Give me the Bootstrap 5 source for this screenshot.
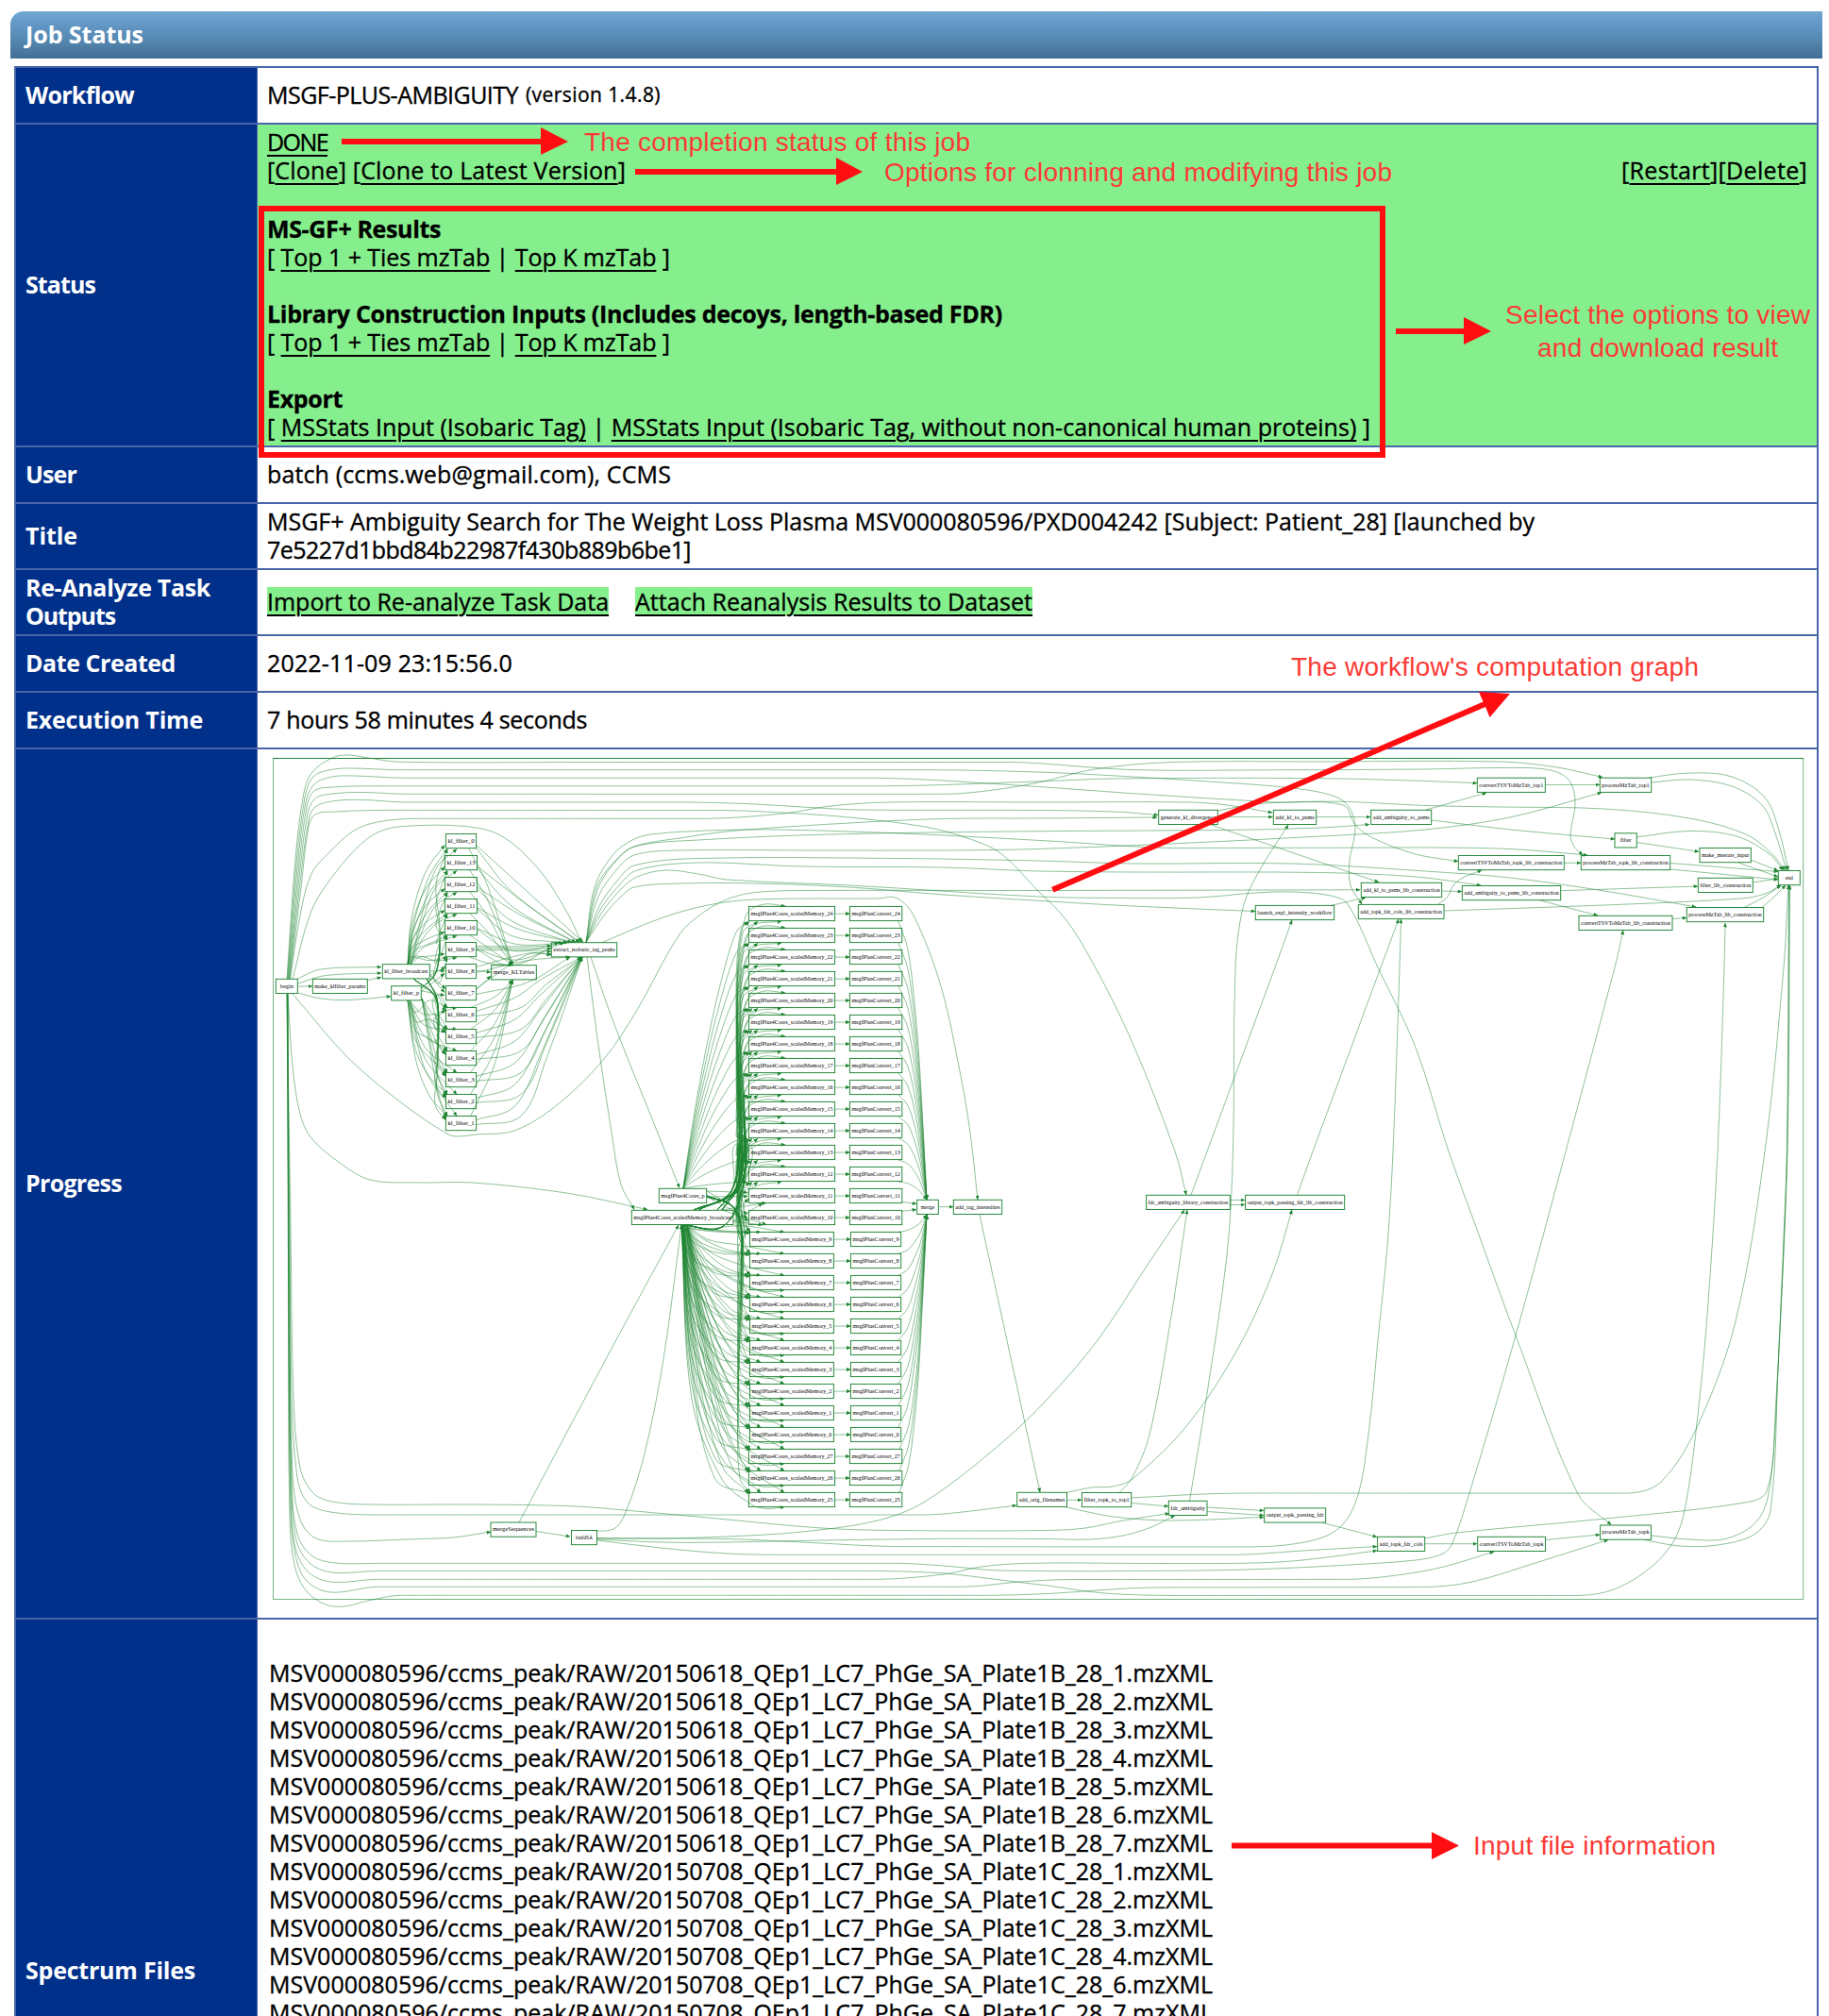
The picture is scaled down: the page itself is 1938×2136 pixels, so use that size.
<!DOCTYPE html>
<html lang="en">
<head>
<meta charset="utf-8">
<title>Job Status</title>
<meta name="viewport" content="width=device-width, initial-scale=1">
<link href="https://cdn.jsdelivr.net/npm/bootstrap@5.3.0/dist/css/bootstrap.min.css" rel="stylesheet">
<style>
body{background:#fff;color:#000;font-family:"Open Sans","Noto Sans",sans-serif;font-size:25px;line-height:30px}
.page{height:2136px;padding:12px 7px 0 11px}
.titlebar{height:50px;padding:0 0 2px 16px;color:#fff;font-weight:700;border-top-left-radius:14px;background:linear-gradient(#70a8d4 0%,#6093c1 35%,#5689b1 60%,#416e96 100%)}
.job{margin:8px 4px 0 4px;border:2px solid #4966a8;border-bottom:0}
.job-row{min-height:60px;border-bottom:2px solid #4966a8}
.job-key{width:256px;flex:none;padding:3px 10px 5px;background:#00308a;color:#fff;font-weight:700;border-right:1px solid #4966a8}
.job-val{padding:3px 10px 5px}
.job-val .fit{-webkit-text-stroke:.35px #000}
.files .fit{-webkit-text-stroke:.35px #000}
.done-bg{background:#86ef8d}
.page a{color:#000;text-decoration:underline;text-decoration-thickness:2px;text-underline-offset:4px;text-decoration-skip-ink:auto}
.fit{white-space:pre;display:inline-block}
.ver{font-size:21px;-webkit-text-stroke:.2px #000}
.clones{margin-bottom:2px}
.status-row{height:342px}.graph-row{height:922px}.files-row{height:745px}
.files{padding:41px 0 0 12px}
.notes{z-index:5;font-family:"Liberation Sans",Arial,sans-serif;font-size:28px}
.graph{display:block}
.graph path{fill:none;stroke:#1f8533;stroke-width:.5}
.graph rect{fill:#fff;stroke:#1f8533;stroke-width:.95}
.graph .frame{fill:none;stroke-width:.6}
.graph text{font-family:"Liberation Serif","Times New Roman",serif;font-size:6.5px;fill:#000}
</style>
<script src="https://cdn.jsdelivr.net/npm/bootstrap@5.3.0/dist/js/bootstrap.bundle.min.js"></script>
</head>
<body>
<div class="page position-relative overflow-hidden">
  <header class="titlebar d-flex align-items-center"><span class="fit" data-w="125">Job Status</span></header>
  <main class="job">
    <div class="job-row d-flex"><div class="job-key d-flex align-items-center"><span class="fit" data-w="115">Workflow</span></div>
      <div class="job-val flex-grow-1 d-flex align-items-center gap-2"><span class="fit" data-w="266">MSGF-PLUS-AMBIGUITY</span><span class="fit ver" data-w="143">(version 1.4.8)</span></div></div>
    <div class="job-row status-row d-flex"><div class="job-key d-flex align-items-center"><span class="fit" data-w="74">Status</span></div>
      <div class="job-val done-bg flex-grow-1">
        <div><a href="#" class="fit" data-w="64">DONE</a></div>
        <div class="clones d-flex justify-content-between"><span class="fit" data-w="380">[<a href="#">Clone</a>] [<a href="#">Clone to Latest Version</a>]</span><span class="fit" data-w="197">[<a href="#">Restart</a>][<a href="#">Delete</a>]</span></div>
        <br>
        <div><b class="fit" data-w="184">MS-GF+ Results</b></div>
        <div><span class="fit" data-w="427">[ <a href="#">Top 1 + Ties mzTab</a> | <a href="#">Top K mzTab</a> ]</span></div>
        <br>
        <div><b class="fit" data-w="779">Library Construction Inputs (Includes decoys, length-based FDR)</b></div>
        <div><span class="fit" data-w="427">[ <a href="#">Top 1 + Ties mzTab</a> | <a href="#">Top K mzTab</a> ]</span></div>
        <br>
        <div><b class="fit" data-w="80">Export</b></div>
        <div><span class="fit" data-w="1169">[ <a href="#">MSStats Input (Isobaric Tag)</a> | <a href="#">MSStats Input (Isobaric Tag, without non-canonical human proteins)</a> ]</span></div>
      </div></div>
    <div class="job-row d-flex"><div class="job-key d-flex align-items-center"><span class="fit" data-w="54">User</span></div>
      <div class="job-val d-flex align-items-center"><span class="fit" data-w="428">batch (ccms.web@gmail.com), CCMS</span></div></div>
    <div class="job-row d-flex"><div class="job-key d-flex align-items-center"><span class="fit" data-w="55">Title</span></div>
      <div class="job-val"><div><span class="fit" data-w="1343">MSGF+ Ambiguity Search for The Weight Loss Plasma MSV000080596/PXD004242 [Subject: Patient_28] [launched by</span></div><div><span class="fit" data-w="449">7e5227d1bbd84b22987f430b889b6be1]</span></div></div></div>
    <div class="job-row d-flex"><div class="job-key"><div><span class="fit" data-w="196">Re-Analyze Task</span></div><div><span class="fit" data-w="95">Outputs</span></div></div>
      <div class="job-val d-flex align-items-center"><a href="#" class="fit done-bg me-4" data-w="362">Import to Re-analyze Task Data</a><a href="#" class="fit done-bg ms-1" data-w="421">Attach Reanalysis Results to Dataset</a></div></div>
    <div class="job-row d-flex"><div class="job-key d-flex align-items-center"><span class="fit" data-w="159">Date Created</span></div>
      <div class="job-val d-flex align-items-center"><span class="fit" data-w="260">2022-11-09 23:15:56.0</span></div></div>
    <div class="job-row d-flex"><div class="job-key d-flex align-items-center"><span class="fit" data-w="188">Execution Time</span></div>
      <div class="job-val d-flex align-items-center"><span class="fit" data-w="339">7 hours 58 minutes 4 seconds</span></div></div>
    <div class="job-row graph-row d-flex"><div class="job-key d-flex align-items-center"><span class="fit" data-w="102">Progress</span></div>
      <svg class="graph" id="graph" width="1651" height="920" viewBox="273 794 1651 920"><defs><marker id="tip" viewBox="0 0 6 5" refX="5.5" refY="2.5" markerWidth="5" markerHeight="4" markerUnits="userSpaceOnUse" orient="auto"><polygon points="0,0 6,2.5 0,5" fill="#1f8533"/></marker></defs></svg></div>
    <div class="job-row files-row d-flex"><div class="job-key d-flex align-items-center"><span class="fit" data-w="180">Spectrum Files</span></div>
      <div class="files" id="files"></div></div>
  </main>

  <svg class="notes position-absolute top-0 start-0" width="1938" height="2136" viewBox="0 0 1938 2136">
    <rect x="277" y="221" width="1188" height="261" fill="none" stroke="#ff0d10" stroke-width="6"/>
    <g fill="#ff0d10">
      <path d="M362 147H573V135L602 150L573 164V153H362Z"/>
      <path d="M673 179H886V167L914 182L886 196V185H673Z"/>
      <path d="M1479 348H1551V336L1580 351L1551 365V354H1479Z"/>
      <path d="M1305 1952.500H1517V1941L1546 1955.500L1517 1970V1958.500H1305Z"/>
      <path d="M1114 940L1571.500 743.500L1567 733L1600 735L1578.500 760L1574 749L1116.500 945.500Z"/>
    </g>
    <g fill="#fc3a36">
      <text x="619" y="160" textLength="409">The completion status of this job</text>
      <text x="937" y="191.500" textLength="538">Options for clonning and modifying this job</text>
      <text x="1595" y="343" textLength="323">Select the options to view</text>
      <text x="1629" y="378" textLength="255">and download result</text>
      <text x="1368" y="716" textLength="432">The workflow's computation graph</text>
      <text x="1561" y="1965" textLength="257">Input file information</text>
    </g>
  </svg>
</div>

<script>
// Input files
const names = [];
[1,2,3,4,5,6,7].forEach(n => names.push('20150618_QEp1_LC7_PhGe_SA_Plate1B_28_' + n));
[1,2,3,4,6,7].forEach(n => names.push('20150708_QEp1_LC7_PhGe_SA_Plate1C_28_' + n));
document.getElementById('files').innerHTML = names.map(n => `<div><span class="fit" data-w="1000">MSV000080596/ccms_peak/RAW/${n}.mzXML</span></div>`).join('');

document.querySelectorAll('.fit').forEach(e => {
  const w = e.getBoundingClientRect().width, n = e.textContent.length;
  e.style.letterSpacing = ((+e.dataset.w - w) / n).toFixed(3) + 'px';
});

// Workflow graph
const nodes = [], edges = [];
const node = (x1, x2, y, t) => nodes.push([x1, x2, y, t]);
const edge = (...p) => edges.push(p);

node(292.3,315.3,1037.3,'begin'); node(331.3,389.3,1037.3,'make_klfilter_params');
node(405.3,455.3,1021.7,'kl_filter_broadcast'); node(414.7,446.3,1044.7,'kl_filter_p');
node(520.7,568.3,1022.7,'merge_KLTables'); node(584.3,653.7,998.7,'extract_isobaric_tag_peaks');
node(698.3,748.7,1259.3,'msgfPlus4Cores_p'); node(669.3,777,1282.3,'msgfPlus4Cores_scaledMemory_broadcast');
node(971.7,994.3,1271.3,'merge'); node(1010.3,1061.7,1271.3,'add_tag_intensities');
node(520,568,1613,'mergeSequences'); node(605.5,632.5,1621.5,'buildSA');
node(1077.7,1130.5,1581.3,'add_orig_filenames'); node(1146.4,1198.7,1581.5,'filter_topk_to_top1');
node(1238.3,1279,1590.3,'fdr_ambiguity'); node(1339.7,1404.7,1597.9,'output_topk_passing_fdr');
node(1459.6,1509.7,1628.3,'add_topk_fdr_cols'); node(1565.7,1637.5,1628.3,'convertTSVToMzTab_topk');
node(1695.6,1749.5,1616,'processMzTab_topk');
node(1214.6,1303.3,1266.3,'fdr_ambiguity_library_construction'); node(1319.6,1424.7,1266.3,'output_topk_passing_fdr_lib_construction');
node(1227.7,1290.3,858.3,'generate_kl_divergence'); node(1349.3,1394.7,858.3,'add_kl_to_psms'); node(1452.7,1516.7,858.3,'add_ambiguity_to_psms');
node(1565.3,1637.3,824.2,'convertTSVToMzTab_top1'); node(1695.3,1749.7,824.2,'processMzTab_top1');
node(1711,1734.3,882.8,'filter'); node(1801,1855.3,898.5,'make_msstats_input');
node(1545.3,1657.3,906.5,'convertTSVToMzTab_topk_lib_construction'); node(1675.3,1769.7,906.5,'processMzTab_topk_lib_construction');
node(1884.3,1907.3,922.5,'end'); node(1442.3,1527.7,935.3,'add_kl_to_psms_lib_construction');
node(1549.3,1653.7,938.5,'add_ambiguity_to_psms_lib_construction'); node(1799.3,1857.3,930.3,'filter_lib_construction');
node(1439.3,1530,958.4,'add_topk_fdr_cols_lib_construction'); node(1330.3,1413.7,959.4,'launch_expl_intensity_workflow');
node(1673,1772,970.3,'convertTSVToMzTab_lib_construction'); node(1787.3,1868.7,961.5,'processMzTab_lib_construction');

// begin, upper lanes
edge(304,1037,313,910,322,840,331,818,352,803,368,800,390,803,424,807.3,620,807.5,1070,807.5,1100,808.7,1200,815.6,1350,815.8,1510,815,1590,813.5,1640,815.5,1662,826,1669,850,1664,885,1668,897,1677,906);
edge(304.5,1037,314,915,323,845,332,823,350,815.7,372,814,425,815.7,980,815.7,1100,818,1200,823,1280,828,1370,835,1415,844,1430,856,1436,878,1430,912,1431,938,1443,958);
edge(305,1037,315,920,324,850,333,831,352,823,375,822,430,824.3,930,824.3,1100,833.5,1190,840,1350,850,1423,853,1436,874,1455,888,1500,905,1545,912.7);
edge(305.5,1037,316,925,325,855,333,838,352,834,400,832.8,940,832.8,1100,828,1180,825,1400,824.7,1510,827.5,1565,829.7);
edge(306,1037,317,930,326,862,334,846,352,841,385,839.5,430,841.3,1003,841.3,1060,836,1105,828,1160,815,1240,807.6,1400,807,1590,807,1650,813,1698,823.5);
edge(306.5,1037,318,935,327,869,334,855,355,848.5,385,847.5,430,850,730,850,790,851.5,850,855,910,858,1100,858.5,1180,860,1227,863.5);
edge(307,1037,319,940,327,876,334,863,355,860,410,858.4,760,858.5,830,861,900,866,980,876,1025,888,1060,904,1100,944,1130,975,1160,1024,1200,1105,1245,1220,1257,1266);
edge(307.5,1037,318,970,330,926,350,902,375,880,400,871,440,867.3,750,867.3,830,862,880,854,940,850,1100,850,1260,850,1300,853,1348,861);
edge(310,1037,330,965,355,925,385,892,405,880,430,875.3,490,875.3,530,885,570,920,600,965,616,998);
edge(315,1037,340,1027,404,1024.5); edge(316,1042,345,1033.5,404,1031); edge(316,1045,331,1045); edge(389,1038.5,404,1035.5);
edge(316,1052,340,1058,370,1059.5,414,1055.7);
edge(310,1053,370,1122,430,1172,475,1202,485,1204,505,1202,545,1198,590,1171,640,1122,675,1070,720,990,745,967,770,953,800,945.5,860,943.5,1100,943.5,1441,942.8);
edge(305,1053,310,1130,318,1180,330,1206,360,1232,392,1250,440,1253,500,1253,600,1264,686,1281.5);
// begin, lower lanes
edge(304,1053,308,1300,311,1480,318,1555,332,1582,352,1591,390,1594,500,1594,600,1595.5,650,1599,750,1608,870,1619,950,1621.5,1110,1621.5,1150,1619,1190,1611,1239,1603.5);
edge(304,1053,307,1300,309,1480,315,1565,326,1592,350,1602,400,1605,980,1605,1020,1602,1077,1595);
edge(304,1053,307,1400,310,1560,318,1610,335,1630,370,1633,430,1631,480,1629,520,1623);
edge(304.5,1053,307,1400,309,1570,315,1625,330,1648,355,1656,400,1656.3,950,1656.3,1000,1659,1060,1664,1270,1664,1350,1662,1430,1658,1500,1653,1527,1647,1538,1637,1557,1582,1606,1415,1659,1220,1711,1025,1720,986);
edge(304.5,1053,306,1400,309,1580,314,1632,328,1656,352,1666,400,1664.5,930,1664.5,1000,1667,1060,1674,1110,1680,1170,1688,1250,1690.5,1670,1690.5,1710,1684,1750,1660,1775,1630,1787,1590,1800,1490,1810,1380,1820,1220,1827,1025,1828,978);
edge(305,1053,306,1400,308,1590,313,1640,326,1665,350,1676,400,1673.3,930,1673.3,1000,1668,1040,1660,1090,1656.3,1230,1656.5,1330,1656,1380,1653,1459,1643);
edge(305,1053,306,1400,308,1600,313,1648,325,1675,350,1687,400,1681.3,1020,1681.3,1080,1676,1135,1673.5,1430,1673.3,1480,1669,1530,1660,1583,1644);
edge(305,1053,305.5,1400,307,1610,312,1658,324,1685,345,1700,365,1702,390,1696,425,1690.3,1050,1690.3,1110,1688.5,1220,1682,1510,1681.5,1560,1676,1630,1655,1704,1631.5);
edge(568,1622.5,604,1628); edge(550,1613,650,1425,719,1298);
edge(622,1621.5,650,1620,663,1602,683,1540,703,1440,722,1298);
edge(633,1629.5,700,1630,770,1628,850,1623,930,1611,980,1591,1060,1530,1110,1482,1163,1420,1216,1340,1255,1282);
edge(633,1630,770,1630.5,850,1634,950,1638.6,1300,1639,1370,1636,1415,1622,1437,1590,1450,1520,1460,1420,1470,1320,1476,1220,1483,1025,1484.5,974);
edge(633,1631,700,1634,770,1634,870,1632,1000,1630.3,1110,1630.5,1155,1631,1190,1627,1220,1618,1245,1605.5);
edge(633,1632,700,1640,770,1646,830,1647.3,1310,1647.3,1380,1643,1459,1638.5);
// extract_isobaric_tag_peaks fan
[[630,940,650,905,670,890,690,884,750,880,820,879,900,881,1000,885,1120,891.5,1240,898.5,1510,898,1600,899.5,1682,906],
 [632,940,652,912,672,897,720,888,780,880,900,872,1000,867.5,1100,867,1226,866],
 [633,943,652,913,672,897,740,890,880,884,1100,880.7,1300,879.5,1400,877,1451,873.5],
 [634,950,653,922,672,906,720,901,860,901,1000,901,1100,899.5,1240,894,1400,886,1510,879,1600,866,1697,839.7],
 [635,960,655,932,672,917,740,909.5,950,909.5,1100,912,1200,915,1370,915,1510,923,1600,930,1700,944,1797,961],
 [636,964,656,938,675,922,740,914,850,918,1000,919,1100,923,1200,924,1400,924.5,1500,929,1569,938],
 [637,968,658,942,675,929,705,922,740,926,770,932,900,938,1100,950,1190,951.5,1270,951,1330,946,1370,945,1410,949,1428,958,1460,1025,1500,1110,1535,1220,1564,1300,1606,1415,1672,1583,1707,1615.5],
 [640,970,658,950,672,940,720,936,800,936,900,940,1000,948,1120,955.5,1200,960,1330,965.5]].forEach(a => edge(621,998.5,...a));
edge(638,998.5,700,973,750,959,800,953,930,952,950,951.5,968,970,997,1045,1018,1140,1028,1200,1036,1271);
edge(622,1014,633,1100,648,1200,658,1255,672,1281.5); edge(626,1014,650,1083,690,1183,720,1258.5);
// right-hand side
edge(1290,865.6,1348.5,865.6); edge(1290,859,1330,852,1380,849.5,1430,849.5,1510,853.5,1590,855,1700,857,1790,867,1850,884,1878,905,1891,922);
edge(1282,873.5,1461,934.7); edge(1395,865.6,1452,865.6); edge(1511,858,1575,840); edge(1517,869,1600,879,1711,889);
edge(1637,831.5,1695,831.5);
edge(1747,824,1790,819,1835,823,1870,845,1885,880,1895,922); edge(1750,829,1790,826,1835,833,1867,853,1880,880,1893,922);
edge(1734,892.5,1800,902.3); edge(1734,887,1790,880.5,1840,886,1875,905,1889,922);
edge(1855,911,1884,922.5); edge(1842,914,1884,929); edge(1657,914.3,1675,914.3);
edge(1770,914.5,1884,923.5); edge(1770,921,1884,932); edge(1857,935,1884,931);
edge(1528,944,1549,944.6); edge(1654,943.7,1799,939); edge(1632,954,1693,970); edge(1772,973.5,1787,972.5);
edge(1848,961.5,1870,950,1887,938); edge(1867,961.5,1880,950,1892,938);
edge(1530,965,1700,959,1845,952,1870,947,1887,938);
edge(1524,958,1534,950,1540,938,1550,930,1570,922); edge(1410,959.5,1447,951);
edge(1260.5,1590,1278,1483,1300,1330,1306.5,1220,1309,1025,1317,962,1333,925,1365,874);
edge(1262,1266,1279,1220,1351,1025,1369,975); edge(1374.5,1266,1391,1220,1463,1025,1482,974);
edge(1303.5,1271.5,1319,1271.5); edge(1303.5,1276.5,1319,1276.5);
edge(1130,1581.5,1157,1576,1179,1575,1200,1567,1258,1510,1311,1430,1348,1350,1369,1282);
edge(1186,1581.5,1200,1565,1218,1520,1239,1407,1258,1282);
edge(1199,1592.5,1238,1596); edge(1199,1587,1290,1582.5,1400,1582,1725,1582,1760,1570,1799,1510,1839,1400,1870,1220,1890,1025,1895,938);
edge(1130.5,1589.3,1146,1589.3); edge(1130,1597,1180,1607,1240,1611,1339,1607.5);
edge(1279,1597,1339,1600.5); edge(1279,1601.5,1339,1605.5); edge(1402,1613.5,1459,1628.5);
edge(1510,1635.7,1565,1635.7); edge(1637.5,1631.5,1695,1626);
edge(1510,1630,1543,1624,1691,1610,1849,1592,1872,1580,1881,1500,1891,1287,1893.5,1220,1895.5,938);
edge(1750,1627,1790,1631,1830,1630,1863,1610,1876,1570,1884,1450,1893.5,1220,1896,938);
edge(1742,1631.5,1780,1638,1820,1637,1860,1625,1876,1600,1884,1450,1894,1220,1896.5,938);
edge(994.5,1278.7,1010,1278.7); edge(1038,1287,1102,1581);

// kl_filter column
[0,13,12,11,10,9,8,7,6,5,4,3,2,1].forEach((k, i) => {
  const y = 883.5 + 23 * i, wide = k > 9, l = wide ? 471.4 : 472.4, r = wide ? 505.5 : 504.6;
  node(l, r, y, 'kl_filter_' + k);
  if (i < 6) {
    const d = 1022 - y;
    edge(432,1022,436,1022-d*.35,451,y+10+d*.22,471,y+12);
    edge(433,1022,438,1022-d*.3,455,y+14+d*.22,474,y+16);
    edge(435,1022,446,1022-d*.35,462,y+16+d*.15,484,y+16);
    edge(447,1047,462,1030,466,1010-d*.2,462,y+40+d*.1,474,y+16);
    edge(r-8,y+15,(r+530)/2,y+15+d*.3,543,1022.5);
    edge(r,y+12-i,(r+590)/2,y+12+d*.28,598+(5-i)*4,998.5);
    edge(r,y+15-i*1.5,(r+580)/2,y+17+d*.32,592+(5-i)*4.5,998.5);
  } else if (i < 8) {
    edge(456,1029+(i-6)*5,471,y+7); edge(456,1033,472,y+3); edge(447,1050,471,y+10);
    edge(r,y+7-(i-6)*3,520,1030+(i-6)*4);
    edge(r,y+3,560,1010+i-6,584,1006+i*.8); edge(r,y+9,560,y-4,604,1014);
  } else {
    const d = y - 1038;
    edge(432,1060,440,1060+d*.42,455,y-4-d*.12,474,y);
    edge(434,1060,450,1060+d*.5,484,y);
    edge(447,1058,462,1058+d*.62,472,y+3);
    edge(452,1037,463,1058,464,1060+d*.5,463,y-10-d*.1,474,y);
    edge(438,1037,462,1058,463,1065+d*.5,461,y-12,472,y+4);
    edge(r-6,y,525,y-d*.4,543,1038.5);
    edge(r,y+4,545,y-10,572,y-20-d*.3,616,1014);
    edge(r,y+9,552,y,578,y-15-d*.3,617,1014);
  }
  if (i === 5) for (let q = 0; q < 3; q++) edge(r,y+4+q*2,560,1003+q*2,584,1002+q*3);
});

// scaled memory columns
[24,23,22,21,20,19,18,17,16,15,14,13,12,11,10,9,8,7,6,5,4,3,2,1,0,27,26,25].forEach((k, i) => {
  const y = 960.4 + 23 * i, w = k > 9, a = w ? 793.4 : 794.5, b = w ? 884.6 : 883.4, c = w ? 900.4 : 901.4, e = w ? 955.8 : 954.7;
  node(a, b, y, 'msgfPlus4Cores_scaledMemory_' + k);
  node(c, e, y, 'msgfPlusConvert_' + k);
  edge(b, y+7.7, c, y+7.7);
  if (i < 13) {
    const d = 1259 - y - 16;
    edge(724,1259,732,1259-d*.2,748,1259-d*.52,763,1259-d*.76,780,1259-d*.96,792,y+16);
    edge(740,1282,775,1262,784,1215-d*.1,780,y+45+d*.15,785,y+25,794,y+16);
    edge(735,1282,778,1262,786,1220-d*.1,781,y+50+d*.25,787,y+28,803,y+16);
    edge(760,1282,783,1255,789,1210-d*.1,784,y+55+d*.2,795,y+24,828,y+15.5);
    edge(765,1282,787,1250,789,1215-d*.1,781,y+45+d*.15,790,y+10,808,y-2,832,y-.5);
    if (i > 3) edge(725,1298,765,1300,786,1262,790,1215-d*.1,782,y+60+d*.2,788,y+24,797,y+16);
  } else if (i < 15) {
    [[749,1262,792,y+4],[749,1268,792,y+8],[765,1282,812,y+15],[777,1286,793,y+11],[777,1294,808,y+15.5]].forEach(p => edge(...p));
  } else {
    const d = y - 1298;
    edge(724,1298,737,1298+d*.5,765,y-d*.1,793,y);
    edge(723,1298,733,1298+d*.55,758,y-d*.05,795,y+1);
    edge(726,1298,746,1298+d*.5,775,y-d*.1,806,y);
    edge(728,1298,750,1298+d*.5,785,y-6-d*.1,831,y);
    if (i > 16) edge(722,1298,733,1298+d*.65,765,y-d*.05,797,y+13,812,y+17,831,y+15.5);
    edge(749,1267,778,1280,786,1310,782,y-40-d*.15,784,y-15,795,y);
    if (i < 22) edge(749,1268,776,1278,787,1312,786,y-40,786,y-20,794,y);
  }
  if (i < 13) { const s = y + 15.5, d = 1271 - s; edge(e-4,s,e+6,s+d*.1,e+14,s+d*.32,975,s+d*.55,982,1271); }
  else if (i < 15) edge(e,y+14-(i-13)*13,971,1275.5+(i-13)*6);
  else { const d = y - 1287; edge(e-3,y,e+7,y-d*.1,e+15,y-d*.32,975.5,y-d*.55,982,1287); }
});

// Smooth curve through the points of an edge
function curve(p) {
  const n = p.length / 2, P = i => [p[2*i], p[2*i+1]];
  const dir = i => { const a = P(Math.max(0,i-1)), b = P(Math.min(n-1,i+1)), h = Math.hypot(b[0]-a[0], b[1]-a[1]) || 1; return [(b[0]-a[0])/h, (b[1]-a[1])/h]; };
  let s = `M${P(0)}`;
  for (let i = 0; i < n-1; i++) {
    const a = P(i), b = P(i+1), u = dir(i), v = dir(i+1);
    const h = Math.hypot(b[0]-a[0], b[1]-a[1]);
    // long level lanes stay straight
    const k = h > 250 && Math.abs(b[1]-a[1]) < 3 ? 6 : h / 3;
    s += `C${(a[0]+u[0]*k).toFixed(1)},${(a[1]+u[1]*k).toFixed(1)} ${(b[0]-v[0]*k).toFixed(1)},${(b[1]-v[1]*k).toFixed(1)} ${b}`;
  }
  return s;
}
const inset = {begin: 9, end: 15, merge: 8, filter: 11.5, buildSA: 9};
document.getElementById('graph').innerHTML +=
  '<rect class="frame" x="289.3" y="803.5" width="1621.5" height="891"/><path d="M289 803.5H1911" style="stroke-width:1"/>' +
  nodes.map(([a,b,y]) => `<rect x="${a}" y="${y}" width="${(b-a).toFixed(1)}" height="15.2"/>`).join('') +
  edges.map(p => `<path d="${curve(p)}" marker-end="url(#tip)"/>`).join('') +
  nodes.map(([a,b,y,t]) => { const m = inset[t] || 4; return `<text x="${(a+m/2).toFixed(1)}" y="${(y+9.4).toFixed(1)}" textLength="${(b-a-m).toFixed(1)}" lengthAdjust="spacingAndGlyphs">${t}</text>`; }).join('');
</script>
</body>
</html>
